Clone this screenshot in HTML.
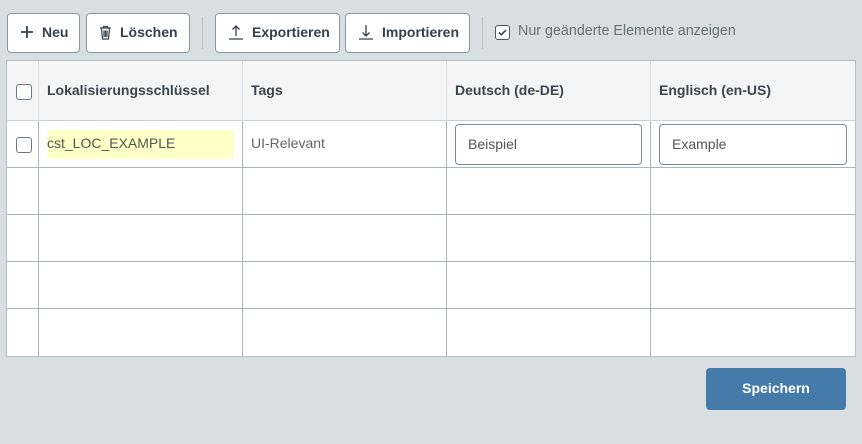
<!DOCTYPE html>
<html><head><style>
*{box-sizing:border-box;margin:0;padding:0}
body{width:862px;height:444px;background:#d9dee1;font-family:"Liberation Sans",sans-serif;position:relative;overflow:hidden;color:#3a4550}
.btn{position:absolute;top:13px;height:40px;background:#fff;border:1px solid #8a97a3;border-radius:4px;font-size:14px;font-weight:bold;color:#36404a;display:flex;align-items:center;padding-left:12px;padding-bottom:2px}
.btn svg{margin-right:8px}
.sep{position:absolute;top:17px;width:1px;height:32px;background:#b8c0c6}
.tbl{position:absolute;left:6px;top:60px;width:850px;height:297px;background:#fff;border:1px solid #b5bfc6}
.hdr{position:absolute;left:0;top:0;width:848px;height:60px;background:#f5f5f5;border-bottom:1px solid #c9d0d5}
.vl{position:absolute;top:0;width:1px;height:295px;background:#a9b4bc}
.vh{position:absolute;top:0;width:1px;height:60px;background:#dcdfe2}
.hl{position:absolute;left:0;width:848px;height:1px;background:#a9b4bc}
.ht{position:absolute;top:21px;font-size:14px;font-weight:bold;color:#3a4550}
.cb{position:absolute;width:16px;height:16px;border:1px solid #6c7a87;border-radius:3px;background:#fff}
.inp{position:absolute;top:63px;height:41px;border:1px solid #7d8a96;border-radius:4px;font-size:14px;color:#555;padding:11px 0 0 12px}
</style></head><body>
<div class="btn" style="left:7px;width:73px"><svg width="14" height="14" viewBox="0 0 14 14"><path d="M7 1v12M1 7h12" stroke="#36404a" stroke-width="1.8"/></svg>Neu</div>
<div class="btn" style="left:86px;width:104px"><svg width="13" height="15" viewBox="0 0 13 15"><path d="M1 3h11M4.5 3V1.5h4V3M2.5 3l1 11h6l1-11M5 5.5v6.5M6.5 5.5v6.5M8 5.5v6.5" stroke="#36404a" stroke-width="1.2" fill="none"/></svg>Löschen</div>
<div class="sep" style="left:202px"></div>
<div class="btn" style="left:215px;width:125px"><svg width="16" height="16" viewBox="0 0 16 16"><path d="M8 12V2M4.5 5.5L8 2l3.5 3.5M1 15h14" stroke="#36404a" stroke-width="1.3" fill="none"/></svg>Exportieren</div>
<div class="btn" style="left:345px;width:125px"><svg width="16" height="16" viewBox="0 0 16 16"><path d="M8 1v11M4.5 8.5L8 12l3.5-3.5M1 15h14" stroke="#36404a" stroke-width="1.3" fill="none"/></svg>Importieren</div>
<div class="sep" style="left:482px"></div>
<div class="cb" style="left:495px;top:25px;width:15px;height:15px;border-color:#4a5560"><svg width="13" height="13" viewBox="0 0 13 13" style="position:absolute;left:0;top:0"><path d="M3 6.5l2.3 2.3L10 4" stroke="#36404a" stroke-width="1.6" fill="none"/></svg></div>
<div style="position:absolute;left:518px;top:23px;font-size:14.3px;color:#66707a">Nur geänderte Elemente anzeigen</div>
<div class="tbl">
<div class="hdr"></div>
<div class="vh" style="left:31px"></div><div class="vh" style="left:235px"></div><div class="vh" style="left:439px"></div><div class="vh" style="left:643px"></div>
<div class="vl" style="left:31px;top:60px;height:235px"></div><div class="vl" style="left:235px;top:60px;height:235px"></div><div class="vl" style="left:439px;top:60px;height:235px"></div><div class="vl" style="left:643px;top:60px;height:235px"></div>
<div class="hl" style="top:106px"></div><div class="hl" style="top:153px"></div><div class="hl" style="top:200px"></div><div class="hl" style="top:247px"></div>
<div class="cb" style="left:9px;top:23px"></div>
<div class="cb" style="left:9px;top:76px"></div>
<div class="ht" style="left:40px">Lokalisierungsschlüssel</div>
<div class="ht" style="left:244px">Tags</div>
<div class="ht" style="left:448px">Deutsch (de-DE)</div>
<div class="ht" style="left:652px">Englisch (en-US)</div>
<div style="position:absolute;left:40px;top:69px;width:187px;height:29px;background:#ffffc8;border-radius:4px;font-size:14px;color:#555;padding:5px 0 0 0">cst_LOC_EXAMPLE</div>
<div style="position:absolute;left:244px;top:74px;font-size:14px;color:#666">UI-Relevant</div>
<div class="inp" style="left:448px;width:187px">Beispiel</div>
<div class="inp" style="left:652px;width:188px">Example</div>
</div>
<div style="position:absolute;left:706px;top:368px;width:140px;height:42px;background:#467aa8;border-radius:4px;color:#fff;font-size:14px;font-weight:bold;text-align:center;line-height:40px">Speichern</div>
</body></html>
